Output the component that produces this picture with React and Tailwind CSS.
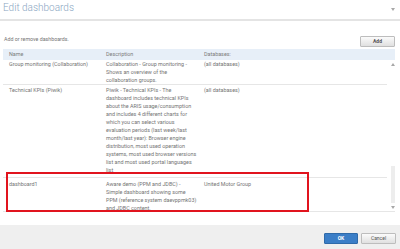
import React from 'react';

const rows = [
  {
    name: 'Group monitoring (Collaboration)',
    desc: ['Collaboration - Group monitoring -', 'Shows an overview of the', 'collaboration groups.'],
    db: '(all databases)',
    cls: 'pt-0 pb-0 border-b border-[#e6e6e6]',
  },
  {
    name: 'Technical KPIs (Piwik)',
    desc: [
      'Piwik - Technical KPIs - The',
      'dashboard includes technical KPIs',
      'about the ARIS usage/consumption',
      'and includes 4 different charts for',
      'which you can select various',
      'evaluation periods (last week/last',
      'month/last year): Browser engine',
      'distribution, most used operation',
      'systems, most used browser versions',
      'list and most used portal languages',
      'list',
    ],
    db: '(all databases)',
    cls: 'pt-[1px] pb-[3px] border-b border-[#e6e6e6]',
  },
  {
    name: 'dashboard1',
    desc: ['Aware demo (PPM and JDBC) -', 'Simple dashboard showing some', 'PPM (reference system daevppmk03)', 'and JDBC content.'],
    db: 'United Motor Group',
    cls: 'pt-[2px]',
  },
];

const Tri = ({ up }) => (
  <svg width="4" height="3" viewBox="0 0 4 3">
    <path d={up ? 'M0 3 L2 0 L4 3 Z' : 'M0 0 L4 0 L2 3 Z'} fill="#a8a8a8" />
  </svg>
);

export default function App() {
  return (
    <div className="w-[400px] h-[249px] bg-white flex flex-col overflow-hidden font-['Roboto',sans-serif] text-[#747474]">
      {/* title */}
      <div className="h-[21px] flex items-start justify-between pl-[3px] pr-[5px] border-b-2 border-[#e4e4e4]">
        <div className="mt-[2px] text-[10px] leading-[12px] font-light text-[#8aa6c2]">Edit dashboards</div>
        <div className="mt-[8px]"><Tri /></div>
      </div>

      {/* toolbar */}
      <div className="h-[28px] flex justify-between pl-[4px] pr-[5px]">
        <div className="mt-[15px] text-[5.3px] leading-[6px]">Add or remove dashboards.</div>
        <button className="mt-[15px] w-[35px] h-[11px] border border-[#bdbdbd] rounded-[1px] bg-gradient-to-b from-[#fbfbfb] to-[#e0e0e0] text-[5px] font-bold text-[#555]">
          Add
        </button>
      </div>

      {/* table */}
      <div className="ml-[3px] mr-[5px] text-[5.4px]">
        <div className="h-[11px] bg-[#e7eff8] grid grid-cols-[100px_97px_1fr] items-center text-[#7c7c7c]">
          <div className="pl-[6px]">Name</div>
          <div className="pl-[3px]">Description</div>
          <div className="pl-[4px]">Databases:</div>
        </div>
        <div className="relative h-[152px] flex border-b border-[#e6e6e6]">
          <div className="flex-1 mr-[3px]">
            {rows.map((r) => (
              <div key={r.name} className={`grid grid-cols-[100px_97px_1fr] leading-[8px] ${r.cls}`}>
                <div className="pl-[6px] whitespace-nowrap">{r.name}</div>
                <div className="pl-[3px]">
                  {r.desc.map((l) => (
                    <div key={l} className="whitespace-nowrap">{l}</div>
                  ))}
                </div>
                <div className="pl-[4px] whitespace-nowrap">{r.db}</div>
              </div>
            ))}
          </div>
          {/* scrollbar */}
          <div className="w-[5px] flex flex-col items-center">
            <div className="h-[8px] flex items-center"><Tri up /></div>
            <div className="flex-1" />
            <div className="w-[4px] h-[37px] bg-[#ededed]" />
            <div className="h-[8px] flex items-center"><Tri /></div>
          </div>
          {/* highlight annotation */}
          <div className="absolute left-[3px] top-[112px] w-[303px] h-[40px] border-2 border-[#e1141e]" />
        </div>
      </div>

      <div className="flex-1" />

      {/* footer */}
      <div className="h-[24px] bg-[#efefef] flex justify-end items-start gap-[3px] pr-[4px] pt-[8px]">
        <button className="w-[34px] h-[11px] bg-[#3b7ec7] border border-[#2f6aa9] rounded-[1px] text-[5px] font-bold text-white">
          OK
        </button>
        <button className="w-[35px] h-[11px] border border-[#bdbdbd] rounded-[1px] bg-gradient-to-b from-[#fbfbfb] to-[#e0e0e0] text-[5px] text-[#555]">
          Cancel
        </button>
      </div>
    </div>
  );
}
